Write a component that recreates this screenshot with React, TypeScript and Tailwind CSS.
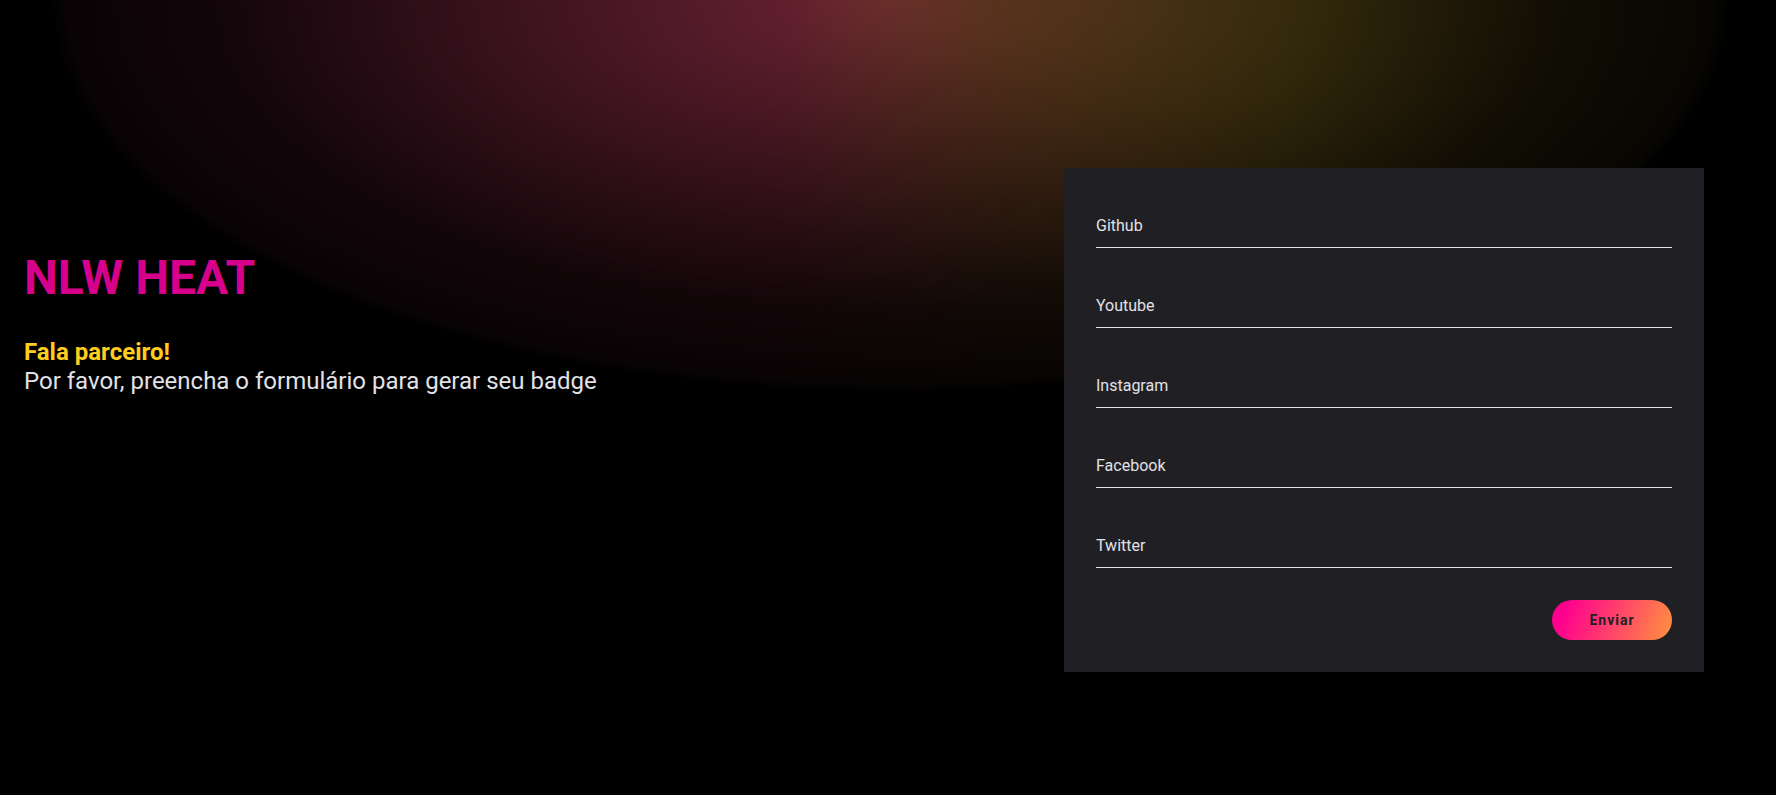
const fields = ['Github', 'Youtube', 'Instagram', 'Facebook', 'Twitter']

export default function App() {
  return (
    <div className="min-h-screen w-full bg-[radial-gradient(ellipse_840px_392px_at_890px_0px,#ffffff_0%,#c4c4c4_22%,#787878_50%,#2c2c2c_78%,#121212_98%,#000000_100%),linear-gradient(90deg,#7a2545_0px,#6e2334_780px,#663a22_1000px,#6a5418_1280px,#6a5418_1776px)] bg-blend-multiply font-['Roboto',sans-serif]">
      <main className="flex justify-between pl-6 pr-[72px] pt-[168px] pb-[123px]">
        <div className="pt-[82px]">
          <h1 className="text-[48px] font-bold leading-[56px] text-[#d6008b]">NLW HEAT</h1>
          <p className="mt-8 text-[24px] font-bold leading-[29px] text-[#ffcd1e]">Fala parceiro!</p>
          <p className="text-[24px] leading-[29px] text-[#e1e1e6]">
            Por favor, preencha o formulário para gerar seu badge
          </p>
        </div>

        <form className="flex w-[640px] flex-col gap-8 bg-[#202024] p-8" onSubmit={(e) => e.preventDefault()}>
          {fields.map((name) => (
            <input
              key={name}
              type="text"
              placeholder={name}
              className="h-12 w-full border-b border-[#e1e1e6] bg-transparent px-0 pt-1 text-[16px] text-[#e1e1e6] outline-none placeholder:text-[#e1e1e6]"
            />
          ))}
          <div className="flex justify-end">
            <button
              type="submit"
              className="h-10 w-[120px] rounded-full bg-[linear-gradient(110deg,#ff008e_12%,#ffcd1e_135%)] text-[14px] font-bold tracking-[1px] text-[#202024]"
            >
              Enviar
            </button>
          </div>
        </form>
      </main>
    </div>
  )
}
